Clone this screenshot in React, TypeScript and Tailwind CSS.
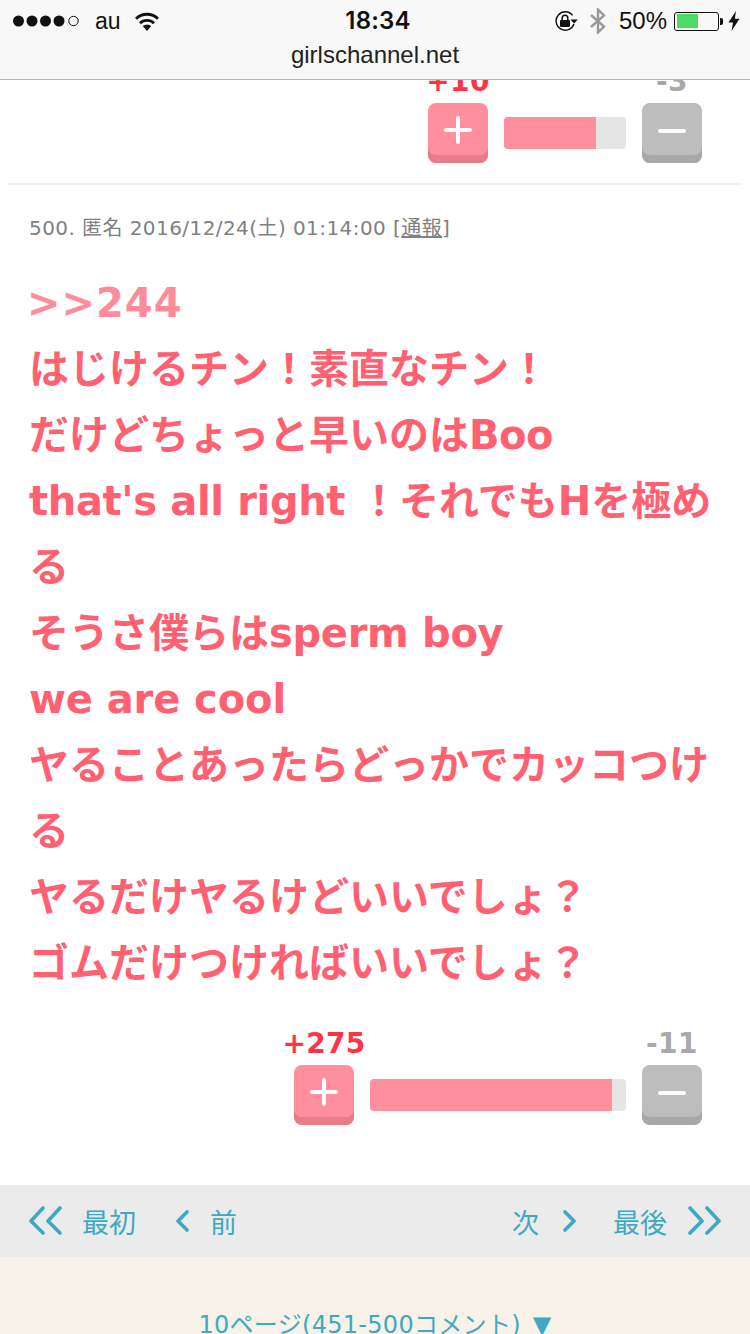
const cjk = "font-['DejaVu_Sans','Noto_Sans_CJK_JP',sans-serif]";

function StatusBar() {
  return (
    <header className="relative z-10 h-20 bg-[#f8f8f8] border-b border-[#b4b4b4] font-['Inter',sans-serif] text-[#111]">
      <div className="flex items-center h-[42px] pl-[13px] pr-[10px]">
        <div className="flex-1 flex items-center">
          <svg width="68" height="12" viewBox="0 0 68 12">
            <circle cx="5.5" cy="6" r="5.5" fill="#111" />
            <circle cx="19" cy="6" r="5.5" fill="#111" />
            <circle cx="32.5" cy="6" r="5.5" fill="#111" />
            <circle cx="46" cy="6" r="5.5" fill="#111" />
            <circle cx="60.5" cy="6" r="4.7" fill="none" stroke="#111" strokeWidth="1" />
          </svg>
          <span className="ml-[14px] text-[23px] leading-none font-['Liberation_Sans',sans-serif]">au</span>
          <svg className="ml-[13px]" width="26" height="19" viewBox="0 0 26 19">
            <path d="M13 19 L8.8 14 A6.4 6.4 0 0 1 17.2 14 Z" fill="#111" />
            <path d="M6 11.2 A10 10 0 0 1 20 11.2" fill="none" stroke="#111" strokeWidth="2.8" />
            <path d="M2 6.8 A15.6 15.6 0 0 1 24 6.8" fill="none" stroke="#111" strokeWidth="2.8" />
          </svg>
        </div>
        <div className="ml-[3px] text-[24px] leading-none font-semibold tracking-[0.2px]">18:34</div>
        <div className="flex-1 flex items-center justify-end">
          <svg width="24" height="20" viewBox="0 0 24 20">
            <path d="M20 13 A9.2 9.2 0 1 1 18.6 4.4" fill="none" stroke="#111" strokeWidth="1.4" />
            <path d="M16.4 8.4 H23.8 L20.1 12.6 Z" fill="#111" />
            <rect x="6" y="9" width="10" height="7" rx="1" fill="#111" />
            <path d="M8.2 9 V7 A2.8 2.8 0 0 1 13.8 7 V9" fill="none" stroke="#111" strokeWidth="1.5" />
          </svg>
          <svg className="ml-[11px]" width="18" height="26" viewBox="0 0 18 26">
            <path d="M2 7 L15 18.6 L9 24.4 V1.6 L15 7.4 L2 19" fill="none" stroke="#999" strokeWidth="2.4" />
          </svg>
          <span className="ml-[12px] text-[24px] leading-none font-['Liberation_Sans',sans-serif]">50%</span>
          <div className="ml-[7px] flex items-center">
            <div className="w-[45px] h-[19px] rounded-[3px] border border-[#111] p-[1.5px]">
              <div className="w-[21px] h-full bg-[#4cd964]" />
            </div>
            <div className="w-[3px] h-[7px] bg-[#111] rounded-r-[2px] ml-px" />
          </div>
          <svg className="ml-[5px]" width="12" height="20" viewBox="0 0 12 20">
            <path d="M8 0 L0.5 11.4 H5 L3.6 20 L11.5 7.8 H6.8 Z" fill="#111" />
          </svg>
        </div>
      </div>
      <div className="text-center text-[24px] leading-none mt-px font-['Liberation_Sans',sans-serif] text-[#222]">girlschannel.net</div>
    </header>
  );
}

function VoteButton({ kind, count }: { kind: "plus" | "minus"; count: string }) {
  const plus = kind === "plus";
  return (
    <div className="flex flex-col items-center w-[60px]">
      <div
        className={
          plus
            ? "mb-[5px] text-[28px] leading-8 font-bold whitespace-nowrap text-[#ff3347] tracking-[0.3px]"
            : "mb-[5px] text-[28px] leading-8 font-bold whitespace-nowrap text-[#a9a9a9] tracking-[0.5px]"
        }
      >
        {count}
      </div>
      <div
        className={
          plus
            ? "w-[60px] h-[60px] rounded-lg flex items-center justify-center pb-[6px] bg-[#ff8f9d] shadow-[inset_0_-8px_0_#e97c89]"
            : "w-[60px] h-[60px] rounded-lg flex items-center justify-center pb-[4px] bg-[#bdbdbd] shadow-[inset_0_-8px_0_#a8a8a8]"
        }
      >
        <svg width="28" height="28" viewBox="0 0 28 28">
          <path d="M2 14 H26" stroke="#fff" strokeWidth="4" strokeLinecap="round" />
          {plus && <path d="M14 2 V26" stroke="#fff" strokeWidth="4" strokeLinecap="round" />}
        </svg>
      </div>
    </div>
  );
}

function Vote({ up, down, barW, fillW }: { up: string; down: string; barW: number; fillW: number }) {
  return (
    <div className="flex justify-end items-end gap-4 pr-[48px]">
      <VoteButton kind="plus" count={up} />
      <div className="h-8 mb-[14px] rounded bg-[#e5e5e5] overflow-hidden" style={{ width: barW }}>
        <div className="h-full bg-[#ff8f9d]" style={{ width: fillW }} />
      </div>
      <VoteButton kind="minus" count={down} />
    </div>
  );
}

function Chevrons({ dir, double }: { dir: "left" | "right"; double?: boolean }) {
  const w = double ? 34 : 13;
  const d =
    dir === "left"
      ? double
        ? "M15 2 L3 15 L15 27 M32 2 L20 15 L32 27"
        : "M11 3 L2 12 L11 21"
      : double
        ? "M2 2 L14 15 L2 27 M19 2 L31 15 L19 27"
        : "M2 3 L11 12 L2 21";
  return (
    <svg width={w} height={double ? 30 : 24} viewBox={`0 0 ${w} ${double ? 30 : 24}`}>
      <path d={d} fill="none" stroke="#3fa9c3" strokeWidth="3.6" strokeLinecap="round" strokeLinejoin="round" />
    </svg>
  );
}

export default function App() {
  return (
    <div className={`h-[1334px] overflow-hidden bg-white ${cjk}`}>
      <StatusBar />
      <main className="-mt-[14px]">
        <Vote up="+10" down="-3" barW={122} fillW={92} />
        <div className="mx-2 mt-5 h-0.5 bg-[#f0f0f0]" />
        <div className="px-[29px]">
          <p className="mt-[29px] text-[20px] leading-7 tracking-[0.43px] text-[#808080]">
            500. 匿名 2016/12/24(土) 01:14:00 [<span className="underline">通報</span>]
          </p>
          <div className="mt-[28px] text-[40px] leading-[66px] font-bold text-[#ff6072]">
            <div className="text-[#ff8c9b] tracking-[1px] -ml-0.5">&gt;&gt;244</div>
            <div>はじけるチン！素直なチン！</div>
            <div>だけどちょっと早いのは<span className="tracking-[-0.5px]">Boo</span></div>
            <div><span className="tracking-[-0.35px]">that's all right</span> ！それでもHを極める</div>
            <div>そうさ僕らは<span className="tracking-[-0.3px]">sperm boy</span></div>
            <div className="tracking-[-0.1px]">we are cool</div>
            <div>ヤることあったらどっかでカッコつける</div>
            <div>ヤるだけヤるけどいいでしょ？</div>
            <div>ゴムだけつければいいでしょ？</div>
          </div>
        </div>
        <div className="mt-[32px]">
          <Vote up="+275" down="-11" barW={256} fillW={242} />
        </div>
        <nav className="mt-[60px] h-[72px] bg-[#ebebeb] flex items-center justify-between pl-[28px] pr-[28px] text-[27px] text-[#3fa9c3] leading-none">
          <div className="flex items-center">
            <Chevrons dir="left" double />
            <span className="ml-5 mt-1">最初</span>
            <span className="ml-[40px]"><Chevrons dir="left" /></span>
            <span className="ml-[21px] mt-1">前</span>
          </div>
          <div className="flex items-center">
            <span className="mt-1">次</span>
            <span className="ml-6"><Chevrons dir="right" /></span>
            <span className="ml-[37px] mt-1">最後</span>
            <span className="ml-[21px]"><Chevrons dir="right" double /></span>
          </div>
        </nav>
        <div className="h-[200px] bg-[#f9f2e9] pt-[54px] text-center text-[24px] leading-7 tracking-[0.3px] text-[#3fa9c3]">
          10ページ(451-500コメント) <span className="ml-1">▼</span>
        </div>
      </main>
    </div>
  );
}
